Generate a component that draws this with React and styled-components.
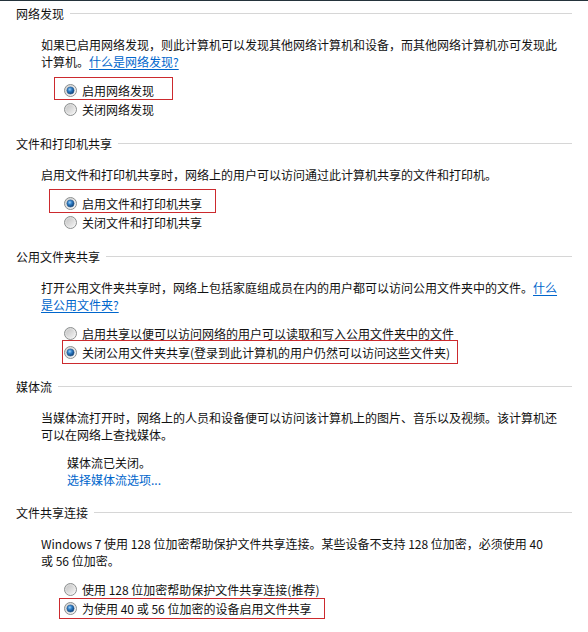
import React, { useId } from "react";
import styled, { createGlobalStyle } from "styled-components";

const GlobalStyle = createGlobalStyle`
  html, body {
    margin: 0;
    background: #fff;
  }
  body {
    font-family: "Microsoft YaHei", "Noto Sans CJK SC", "Noto Sans", sans-serif;
    font-size: 12px;
    color: #111;
  }
`;

const Page = styled.div`
  border-top: 1px solid #24333b;
  padding-top: 3.5px;
  width: 588px;
  box-sizing: border-box;
`;

const Section = styled.section`
  margin-bottom: 16px;
`;

const Heading = styled.div`
  display: flex;
  align-items: center;
  padding: 0 16px;
  height: 17px;
  line-height: 17px;
  margin-bottom: 14px;
`;

const HeadingText = styled.span`
  white-space: nowrap;
`;

const Rule = styled.div`
  flex: 1;
  height: 1px;
  margin-left: 6px;
  background: #d6d6d6;
`;

const Para = styled.p`
  margin: 0 0 11px;
  padding: 0 16px 0 41px;
  line-height: 17px;
  white-space: nowrap;
`;

const Link = styled.a`
  color: #0066cc;
  cursor: pointer;
  text-decoration: ${(p) => (p.$underline ? "underline" : "none")};
  text-underline-offset: 2px;
`;

const Options = styled.div`
  display: flex;
  flex-direction: column;
  align-items: flex-start;
  padding-left: 64px;
`;

const OptionRow = styled.label`
  position: relative;
  display: inline-flex;
  align-items: center;
  gap: 5px;
  height: 19px;
  line-height: 17px;
  white-space: nowrap;
`;

// red annotation box drawn over the chosen option
const Mark = styled.span`
  position: absolute;
  top: ${(p) => p.$t}px;
  right: ${(p) => p.$r}px;
  bottom: ${(p) => p.$b}px;
  left: ${(p) => p.$l}px;
  border: 1px solid #cc2a2e;
  pointer-events: none;
`;

const Status = styled.div`
  padding-left: 67px;
  line-height: 17px;
`;

const RadioSvg = styled.svg`
  display: block;
  flex: none;
`;

function Radio({ checked }) {
  const id = useId().replace(/:/g, "");
  return (
    <RadioSvg width="13" height="13" viewBox="0 0 13 13">
      <defs>
        <linearGradient id={`bg${id}`} x1="0" y1="0" x2="1" y2="1">
          <stop offset="0" stopColor="#cfcfcf" />
          <stop offset="1" stopColor="#fbfbfb" />
        </linearGradient>
        <linearGradient id={`in${id}`} x1="0" y1="0" x2="1" y2="1">
          <stop offset="0" stopColor="#c4c4c4" />
          <stop offset="1" stopColor="#f2f2f2" />
        </linearGradient>
        <radialGradient id={`dot${id}`} cx="0.4" cy="0.35" r="0.65">
          <stop offset="0" stopColor="#9fd0f6" />
          <stop offset="0.45" stopColor="#2f7fc8" />
          <stop offset="1" stopColor="#103f73" />
        </radialGradient>
      </defs>
      <circle cx="6.5" cy="6.5" r="6" fill={`url(#bg${id})`} stroke="#8d9090" />
      <circle cx="6.5" cy="6.5" r="4.3" fill={`url(#in${id})`} />
      {checked && (
        <>
          <circle cx="6.5" cy="6.5" r="3.6" fill={`url(#dot${id})`} />
          <circle cx="6.5" cy="6.5" r="3.6" fill="none" stroke="#2a5f96" strokeWidth="0.6" />
        </>
      )}
    </RadioSvg>
  );
}

function Option({ checked, mark, children }) {
  return (
    <OptionRow>
      <Radio checked={checked} />
      <span>{children}</span>
      {mark && <Mark $t={mark.t} $r={mark.r} $b={mark.b} $l={mark.l} />}
    </OptionRow>
  );
}

function Group({ title, children }) {
  return (
    <Section>
      <Heading>
        <HeadingText>{title}</HeadingText>
        <Rule />
      </Heading>
      {children}
    </Section>
  );
}

export default function App() {
  return (
    <>
      <GlobalStyle />
      <Page>
        <Group title="网络发现">
          <Para>
            如果已启用网络发现，则此计算机可以发现其他网络计算机和设备，而其他网络计算机亦可发现此
            <br />
            计算机。<Link $underline>什么是网络发现?</Link>
          </Para>
          <Options>
            <Option checked mark={{ t: -3.5, r: -19, b: 0, l: -10 }}>
              启用网络发现
            </Option>
            <Option>关闭网络发现</Option>
          </Options>
        </Group>

        <Group title="文件和打印机共享">
          <Para>启用文件和打印机共享时，网络上的用户可以访问通过此计算机共享的文件和打印机。</Para>
          <Options>
            <Option checked mark={{ t: -4.5, r: -14, b: 0, l: -15 }}>
              启用文件和打印机共享
            </Option>
            <Option>关闭文件和打印机共享</Option>
          </Options>
        </Group>

        <Group title="公用文件夹共享">
          <Para>
            打开公用文件夹共享时，网络上包括家庭组成员在内的用户都可以访问公用文件夹中的文件。
            <Link $underline>什么</Link>
            <br />
            <Link $underline>是公用文件夹?</Link>
          </Para>
          <Options>
            <Option>启用共享以便可以访问网络的用户可以读取和写入公用文件夹中的文件</Option>
            <Option checked mark={{ t: -2.5, r: -8, b: -2.5, l: -2 }}>
              关闭公用文件夹共享(登录到此计算机的用户仍然可以访问这些文件夹)
            </Option>
          </Options>
        </Group>

        <Group title="媒体流">
          <Para>
            当媒体流打开时，网络上的人员和设备便可以访问该计算机上的图片、音乐以及视频。该计算机还
            <br />
            可以在网络上查找媒体。
          </Para>
          <Status>
            媒体流已关闭。
            <br />
            <Link>选择媒体流选项...</Link>
          </Status>
        </Group>

        <Group title="文件共享连接">
          <Para>
            Windows 7 使用 128 位加密帮助保护文件共享连接。某些设备不支持 128 位加密，必须使用 40
            <br />
            或 56 位加密。
          </Para>
          <Options>
            <Option>使用 128 位加密帮助保护文件共享连接(推荐)</Option>
            <Option checked mark={{ t: -1, r: -14, b: -1, l: -5 }}>
              为使用 40 或 56 位加密的设备启用文件共享
            </Option>
          </Options>
        </Group>
      </Page>
    </>
  );
}
